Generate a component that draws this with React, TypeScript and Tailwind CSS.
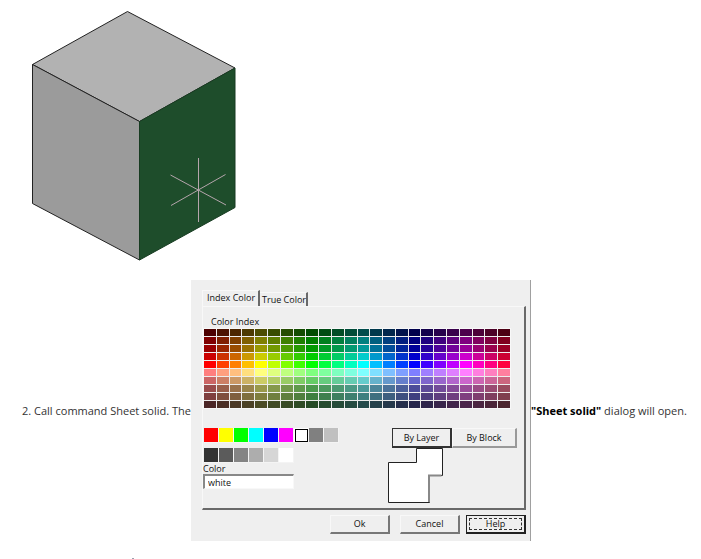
import { useState } from "react"

const SHADES = [
  { high: 76, low: 0 },
  { high: 127, low: 0 },
  { high: 153, low: 0 },
  { high: 204, low: 0 },
  { high: 255, low: 0 },
  { high: 255, low: 127 },
  { high: 204, low: 102 },
  { high: 153, low: 76 },
  { high: 127, low: 63 },
  { high: 76, low: 38 },
]

const BASIC_COLORS = [
  { name: "red", value: "#ff0000" },
  { name: "yellow", value: "#ffff00" },
  { name: "green", value: "#00ff00" },
  { name: "cyan", value: "#00ffff" },
  { name: "blue", value: "#0000ff" },
  { name: "magenta", value: "#ff00ff" },
  { name: "white", value: "#ffffff" },
  { name: "8", value: "#808080" },
  { name: "9", value: "#c0c0c0" },
]

const GRAYS = [
  { name: "250", value: "#333333" },
  { name: "251", value: "#5b5b5b" },
  { name: "252", value: "#848484" },
  { name: "253", value: "#adadad" },
  { name: "254", value: "#d6d6d6" },
  { name: "255", value: "#ffffff" },
]

// 24 hues, 15 degrees apart
function indexColor(column: number, high: number, low: number) {
  const channel = (offset: number) => {
    const distance = Math.abs(((column - offset + 36) % 24) - 12)
    const level = Math.min(1, Math.max(0, 2 - distance / 4))
    return Math.floor(low + (high - low) * level)
  }
  return `rgb(${channel(0)}, ${channel(8)}, ${channel(16)})`
}

export default function App() {
  return (
    <main className="bg-white pb-4 font-['Open_Sans','Noto_Sans',sans-serif] text-[11px] leading-4 text-[#333]">
      <Cube />
      <div className="flex items-center pl-[22px]">
        <p className="w-[169px] shrink-0 whitespace-nowrap">2. Call command Sheet solid. The</p>
        <ColorDialog />
        <p className="whitespace-nowrap">
          <strong className="font-bold text-black">"Sheet solid"</strong> dialog will open.
        </p>
      </div>
      <div className="ml-[132px] mt-[17px] h-px w-[2px] bg-gray-400" />
    </main>
  )
}

function Cube() {
  return (
    <svg className="block h-[280px] w-[260px]" viewBox="0 0 260 280" aria-label="Cube with selected face">
      <g stroke="#222" strokeWidth="1" strokeLinejoin="round">
        <path d="M127.5 11.5L235 68L139.5 121.5L32.5 64.5Z" fill="#b2b2b2" />
        <path d="M32.5 64.5L139.5 121.5V260L32.5 203.5Z" fill="#9b9b9b" />
        <path d="M139.5 121.5L235 68V207.5L139.5 260Z" fill="#1e4d2b" stroke="#173b21" />
      </g>
      <path d="M198.5 158V222M170.5 175L226 205M225.5 174.5L171 205.5" stroke="#b5a5ac" fill="none" />
    </svg>
  )
}

function ColorDialog() {
  const [color, setColor] = useState("white")

  return (
    <section className="w-[340px] shrink-0 border-r border-[#a0a0a0] bg-[#efefef] pb-[7px] pl-[11px] pr-1 pt-[10px] font-['Open_Sans','Noto_Sans',sans-serif] text-[9px] leading-3 text-[#111]">
      <div role="tablist" className="flex items-end">
        <button role="tab" aria-selected="true" className="h-[16px] w-[58px] border-l border-r-2 border-t border-[#f8f8f8] border-r-[#696969] pb-[2px] pl-1 text-left whitespace-nowrap">
          Index Color
        </button>
        <button role="tab" aria-selected="false" className="h-[14px] w-[48px] border-r-2 border-t border-[#f8f8f8] border-r-[#696969] pl-[2px] text-left whitespace-nowrap">
          True Color
        </button>
      </div>
      <div className="h-[204px] border-2 border-l border-t border-[#696969] border-l-[#f8f8f8] border-t-[#f8f8f8] pr-[7px] pt-[9px]">
        <h2 className="pl-2">Color Index</h2>
        <div className="mr-[6px] grid grid-cols-24 gap-px border border-[#f8f8f8] bg-[#ededed]">
          {SHADES.map((shade, row) =>
            Array.from({ length: 24 }, (_, column) => (
              <button
                key={`${row}-${column}`}
                aria-label={`Color ${row + 1}, ${column + 1}`}
                className="h-[7px]"
                style={{ backgroundColor: indexColor(column, shade.high, shade.low) }}
              />
            ))
          )}
        </div>
        <div className="mt-[19px] flex items-start justify-between">
          <div>
            <Swatches colors={BASIC_COLORS} selected={color} onSelect={setColor} />
            <div className="mt-[5px]">
              <Swatches colors={GRAYS} selected={color} onSelect={setColor} />
            </div>
            <label htmlFor="color" className="block leading-[11px]">
              Color
            </label>
            <input
              id="color"
              value={color}
              onChange={(e) => setColor(e.target.value)}
              className="block h-[15px] w-[91px] border border-l-2 border-t-2 border-[#f8f8f8] border-l-[#888] border-t-[#888] bg-white pl-[3px]"
            />
          </div>
          <div className="w-[129px]">
            <div className="flex pl-1">
              <button className="h-[20px] w-[60px] border border-b-2 border-r-2 border-[#333]">By Layer</button>
              <button className="h-[20px] w-[65px] border border-b-2 border-r-2 border-[#999] border-l-[#f8f8f8] border-t-[#f8f8f8]">
                By Block
              </button>
            </div>
            <svg className="block h-[56px] w-[56px]" viewBox="0 0 56 56" aria-hidden="true">
              <path d="M28.5 0.5H54.5V27.5H41.5V54.5H0.5V14.5H28.5Z" fill="#fff" stroke="#222" />
              <path d="M53.5 27.5H41V54" fill="none" stroke="#888" strokeWidth="2" />
            </svg>
          </div>
        </div>
      </div>
      <div className="flex justify-end pt-[5px]">
        <button className="mr-[10px] h-[19px] w-[60px] border border-b-2 border-r-2 border-[#777] border-l-[#f8f8f8] border-t-[#f8f8f8]">
          Ok
        </button>
        <button className="mr-[6px] h-[19px] w-[60px] border border-b-2 border-r-2 border-[#777] border-l-[#f8f8f8] border-t-[#f8f8f8]">
          Cancel
        </button>
        <button className="h-[19px] w-[60px] border border-b-2 border-r-2 border-[#222] p-[2px]">
          <span className="flex h-full items-center justify-center border border-dashed border-[#333]">Help</span>
        </button>
      </div>
    </section>
  )
}

type SwatchesProps = {
  colors: { name: string; value: string }[]
  selected: string
  onSelect: (name: string) => void
}

function Swatches({ colors, selected, onSelect }: SwatchesProps) {
  return (
    <div className="flex pl-px">
      {colors.map((color) => (
        <button
          key={color.name}
          aria-label={color.name}
          onClick={() => onSelect(color.name)}
          className="h-[15px] w-[15px] border-b border-r border-[#f4f4f4]"
          style={{ backgroundColor: color.value }}
        >
          {color.name === selected && <span className="ml-px block h-[13px] border border-black" />}
        </button>
      ))}
    </div>
  )
}
